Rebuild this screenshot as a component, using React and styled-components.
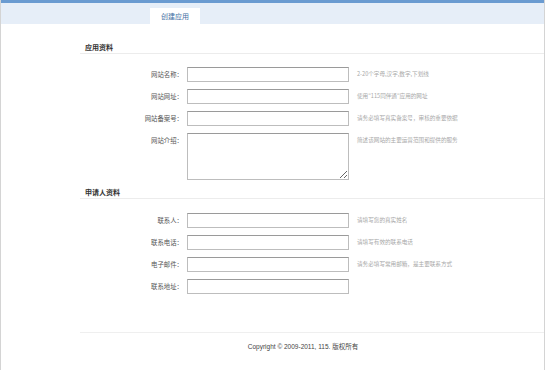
import React from 'react'
import styled, { createGlobalStyle } from 'styled-components'

const GlobalStyle = createGlobalStyle`
  html, body {
    margin: 0;
    padding: 0;
    background: #ffffff;
  }
  body {
    font-family: "Noto Sans CJK SC", "DejaVu Sans", sans-serif;
  }
`

const Page = styled.div`
  width: 543px;
  height: 370px;
  border-left: 1px solid #d4d4d4;
  border-right: 1px solid #d4d4d4;
  box-sizing: content-box;
  display: flex;
  flex-direction: column;
  overflow: hidden;
`

const Header = styled.div`
  border-top: 3px solid #6a9bd1;
  background: #e6eef8;
  height: 21px;
  padding-left: 149px;
  display: flex;
  align-items: flex-end;
`

const Tab = styled.div`
  width: 50px;
  height: 16px;
  background: #ffffff;
  color: #3f6fa3;
  font-size: 7px;
  line-height: 16px;
  text-align: center;
`

const Content = styled.div`
  padding-left: 79px;
  display: flex;
  flex-direction: column;
`

const SectionTitle = styled.div`
  margin-top: ${(p) => p.$top}px;
  height: 11px;
  line-height: 11px;
  padding-left: 5px;
  font-size: 7px;
  font-weight: bold;
  color: #333;
  border-bottom: 1px solid #ececec;
`

const Rows = styled.div`
  margin-top: ${(p) => p.$top}px;
  display: flex;
  flex-direction: column;
  gap: 7px;
`

const Row = styled.div`
  display: flex;
  align-items: flex-start;
`

const Label = styled.label`
  width: 107px;
  padding-right: 4px;
  box-sizing: border-box;
  text-align: right;
  font-size: 6.4px;
  line-height: 15px;
  color: #555;
`

const Input = styled.input`
  width: 162px;
  height: 15px;
  box-sizing: border-box;
  margin: 0;
  padding: 0 2px;
  border: 1px solid #bdbdbd;
  border-top-color: #9a9a9a;
  background: #fff;
  outline: none;
`

const TextArea = styled.textarea`
  width: 162px;
  height: 47px;
  box-sizing: border-box;
  margin: 0;
  padding: 2px;
  border: 1px solid #bdbdbd;
  border-top-color: #9a9a9a;
  background: #fff;
  outline: none;
  display: block;
`

const Hint = styled.span`
  margin-left: 8px;
  font-size: 5.6px;
  line-height: 15px;
  color: #a8a8a8;
  white-space: nowrap;
`

const Footer = styled.div`
  margin-top: 38px;
  border-top: 1px solid #efefef;
  padding: 8px 18px 0 0;
  text-align: center;
  font-size: 6.5px;
  color: #444;
  font-family: "Liberation Sans", "Noto Sans CJK SC", sans-serif;
`

const appFields = [
  { label: '网站名称：', hint: '2-20个字母,汉字,数字,下划线' },
  { label: '网站网址：', hint: '使用"115同伴通"应用的网址' },
  { label: '网站备案号：', hint: '请务必填写真实备案号，审核的重要依据' },
  { label: '网站介绍：', hint: '简述该网站的主要运营范围和提供的服务', area: true },
]

const userFields = [
  { label: '联系人：', hint: '请填写您的真实姓名' },
  { label: '联系电话：', hint: '请填写有效的联系电话' },
  { label: '电子邮件：', hint: '请务必填写常用邮箱，是主要联系方式' },
  { label: '联系地址：', hint: '' },
]

const Field = ({ label, hint, area }) => (
  <Row>
    <Label>{label}</Label>
    {area ? <TextArea /> : <Input type='text' />}
    {hint && <Hint>{hint}</Hint>}
  </Row>
)

export default function App () {
  return (
    <>
      <GlobalStyle />
      <Page>
        <Header>
          <Tab>创建应用</Tab>
        </Header>
        <Content>
          <SectionTitle $top={18}>应用资料</SectionTitle>
          <Rows $top={13}>
            {appFields.map((f) => <Field key={f.label} {...f} />)}
          </Rows>
          <SectionTitle $top={7}>申请人资料</SectionTitle>
          <Rows $top={14}>
            {userFields.map((f) => <Field key={f.label} {...f} />)}
          </Rows>
          <Footer>Copyright © 2009-2011, 115. 版权所有</Footer>
        </Content>
      </Page>
    </>
  )
}
